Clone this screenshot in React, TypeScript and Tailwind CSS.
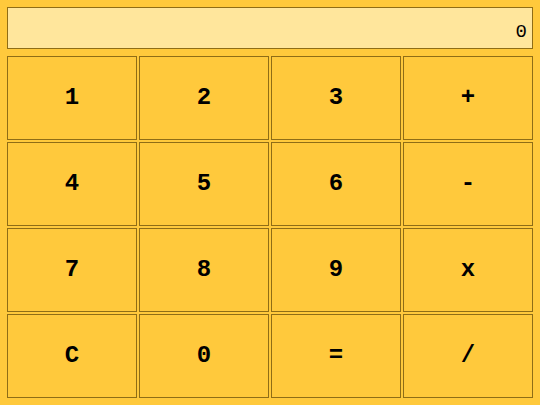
const keys = ['1', '2', '3', '+', '4', '5', '6', '-', '7', '8', '9', 'x', 'C', '0', '=', '/'];

export default function App() {
  return (
    <div
      className="flex h-[405px] w-[540px] flex-col gap-[7px] bg-[#ffc93c] p-[7px]"
      style={{ fontFamily: '"Courier New", "Liberation Mono", monospace' }}
    >
      <div className="flex h-[42px] items-center justify-end border border-[#8f6d16] bg-[#ffe69c] px-[5px] pt-[9px] text-[19px] text-black">
        0
      </div>
      <div className="grid flex-1 grid-cols-4 grid-rows-4 gap-[2px]">
        {keys.map((k) => (
          <button
            key={k}
            className="flex items-center justify-center border border-[#8f6d16] bg-[#ffc93c] text-[24px] font-bold text-black"
          >
            {k}
          </button>
        ))}
      </div>
    </div>
  );
}
